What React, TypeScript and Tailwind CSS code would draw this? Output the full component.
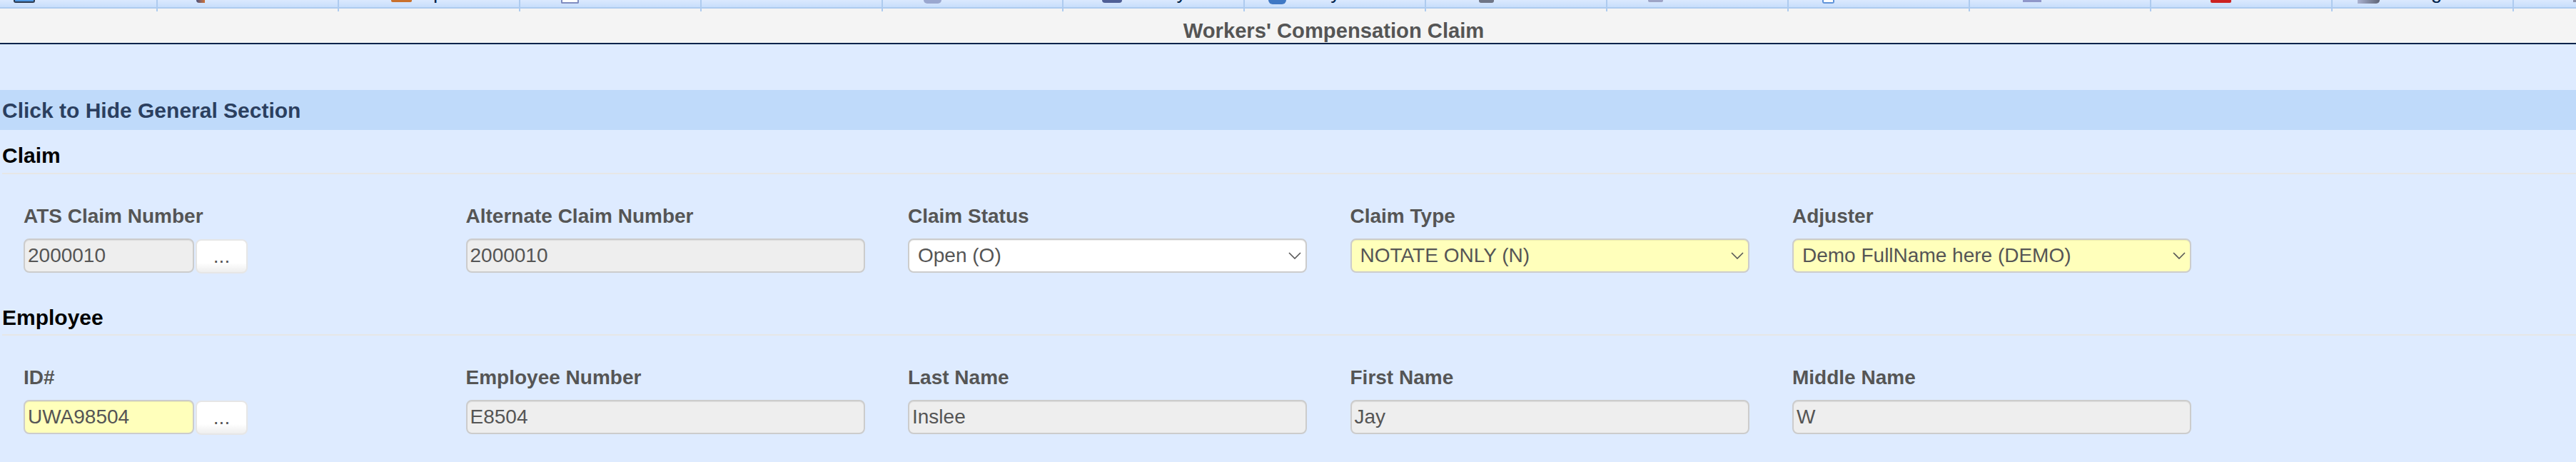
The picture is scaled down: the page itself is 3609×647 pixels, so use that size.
const toolbar = [
  { icon: "ml-[19px] w-[30px] h-[4px] bg-[#4f97e0] border-x-2 border-b-2 border-[#2c3a50] rounded-b-[3px]", mark: "", markGap: "" },
  { icon: "ml-[54px] w-[12px] h-[4px] bg-gradient-to-r from-[#4a4f78] to-[#d0702c] rounded-bl-[4px]", mark: "", markGap: "" },
  { icon: "ml-[73px] w-[29px] h-[3px] bg-[#c9702c] rounded-b-[2px]", mark: "p", markGap: "ml-[30px]" },
  { icon: "ml-[57px] w-[25px] h-[5px] bg-white border-x-2 border-b-2 border-[#7f8cc0] rounded-b-[2px]", mark: "", markGap: "" },
  { icon: "", mark: "", markGap: "" },
  { icon: "ml-[57px] w-[25px] h-[5px] bg-[#9aa7cf] rounded-b-[6px]", mark: "", markGap: "" },
  { icon: "ml-[54px] w-[28px] h-[4px] bg-[#4f5f96] rounded-b-[12px]", mark: "y", markGap: "ml-[76px]" },
  { icon: "ml-[33px] w-[25px] h-[6px] bg-[#3f78c4] rounded-b-[12px]", mark: "y", markGap: "ml-[62px]" },
  { icon: "ml-[74px] w-[21px] h-[4px] bg-[#6f7586] rounded-b-[3px]", mark: "", markGap: "" },
  { icon: "ml-[57px] w-[21px] h-[3px] bg-[#9ea4c6] rounded-b-[2px]", mark: "", markGap: "" },
  { icon: "ml-[47px] w-[17px] h-[5px] bg-white border-x-2 border-b-2 border-[#5f93d8] rounded-b-[3px]", mark: "", markGap: "" },
  { icon: "ml-[74px] w-[26px] h-[3px] bg-[#8f97c9]", mark: "", markGap: "" },
  { icon: "ml-[83px] w-[29px] h-[4px] bg-[#cc2222] rounded-b-[2px]", mark: "", markGap: "" },
  { icon: "ml-[35px] w-[31px] h-[5px] bg-gradient-to-r from-[#aab2d0] to-[#5f6678] rounded-br-[6px]", mark: "g", markGap: "ml-[72px]" },
  { icon: "ml-[83px] w-[6px] h-[3px] bg-[#8c93ad]", mark: "", markGap: "" },
];

type Field = { label: string; value: string; kind: string; tone: string };

const claimFields: Field[] = [
  { label: "ATS Claim Number", value: "2000010", kind: "lookup", tone: "readonly" },
  { label: "Alternate Claim Number", value: "2000010", kind: "input", tone: "readonly" },
  { label: "Claim Status", value: "Open (O)", kind: "select", tone: "white" },
  { label: "Claim Type", value: "NOTATE ONLY (N)", kind: "select", tone: "required" },
  { label: "Adjuster", value: "Demo FullName here (DEMO)", kind: "select", tone: "required" },
];

const employeeFields: Field[] = [
  { label: "ID#", value: "UWA98504", kind: "lookup", tone: "required" },
  { label: "Employee Number", value: "E8504", kind: "input", tone: "readonly" },
  { label: "Last Name", value: "Inslee", kind: "input", tone: "readonly" },
  { label: "First Name", value: "Jay", kind: "input", tone: "readonly" },
  { label: "Middle Name", value: "W", kind: "input", tone: "readonly" },
];

const tones: Record<string, string> = {
  readonly: "bg-[#eeeeee]",
  white: "bg-white",
  required: "bg-[#ffffbb]",
};

const FieldCell = ({ field }: { field: Field }) => {
  const box = `h-[48px] rounded-[8px] border-2 border-[#cccccc] text-[#555555] flex items-center shadow-[inset_0_1px_1px_rgba(0,0,0,0.075)] ${tones[field.tone]}`;
  return (
    <div className="w-[619.5px] shrink-0 pl-[33px]">
      <div className="h-[49px] text-[28px] font-bold leading-[36px] text-[#555555]">
        {field.label}
      </div>
      {field.kind === "lookup" && (
        <div className="flex w-[320px] items-start gap-[2px]">
          <div className={`${box} w-[239px] pl-[4px]`}>{field.value}</div>
          <button
            type="button"
            className="mt-[1px] h-[48px] w-[73px] rounded-[8px] border-2 border-[#e6e6e6] bg-gradient-to-b from-white from-70% to-[#eeeeee] text-[28px] leading-[44px] text-[#555555]"
          >
            ...
          </button>
        </div>
      )}
      {field.kind === "input" && (
        <div className={`${box} w-[559px] pl-[4px]`}>{field.value}</div>
      )}
      {field.kind === "select" && (
        <div className={`${box} w-[559px] justify-between pl-[12px] pr-[6px]`}>
          <span>{field.value}</span>
          <svg viewBox="0 0 18 10" className="h-[10px] w-[18px]" fill="none" stroke="#555555" strokeWidth="1.6">
            <path d="M1 1l8 8 8-8" />
          </svg>
        </div>
      )}
    </div>
  );
};

const App = () => {
  return (
    <div className="h-[647px] w-[3609px] overflow-hidden bg-[#deebff] text-[28px] font-['Liberation_Sans',Arial,sans-serif]">
      <div className="flex h-[10px] overflow-hidden bg-gradient-to-b from-[#dbe9fe] to-[#c8defb]">
        {toolbar.map((item, i) => (
          <div
            key={i}
            className="flex h-[10px] w-[253.9px] shrink-0 items-start border-r-2 border-[#aecbef] first:w-[221px]"
          >
            {item.icon && <div className={item.icon} />}
            {item.mark && (
              <span className={`${item.markGap} mb-[5px] self-end text-[28px] leading-[32px] text-[#00234b]`}>
                {item.mark}
              </span>
            )}
          </div>
        ))}
      </div>
      <div className="h-[2px] bg-[#aecbef]" />
      <div className="relative flex h-[48px] items-end justify-center bg-[#f4f4f4] pl-[128px] text-[29.2px] font-bold leading-[34px] text-[#555555]">
        <div className="absolute left-0 top-0 flex h-[4px]">
          {toolbar.map((_, i) => (
            <div key={i} className="h-[4px] w-[253.9px] shrink-0 border-r-2 border-[#aecbef] first:w-[221px]" />
          ))}
        </div>
        Workers' Compensation Claim
      </div>
      <div className="h-[2px] bg-[#00234b]" />
      <div className="h-[64px]" />
      <div className="flex h-[56px] items-center bg-[#bfdafa] pl-[3px] text-[30px] font-bold text-[#2b3f5f]">
        Click to Hide General Section
      </div>
      <div className="ml-[3px] h-[62px] border-b-2 border-[#e6e6e6] pt-[18px] text-[30px] font-bold leading-[36px] text-black">
        Claim
      </div>
      <div className="flex pt-[41px]">
        {claimFields.map((f) => (
          <FieldCell key={f.label} field={f} />
        ))}
      </div>
      <div className="ml-[3px] mt-[44px] h-[43px] border-b-2 border-[#e6e6e6] text-[30px] font-bold leading-[36px] text-black">
        Employee
      </div>
      <div className="flex pt-[41px]">
        {employeeFields.map((f) => (
          <FieldCell key={f.label} field={f} />
        ))}
      </div>
    </div>
  );
};

export default App;
